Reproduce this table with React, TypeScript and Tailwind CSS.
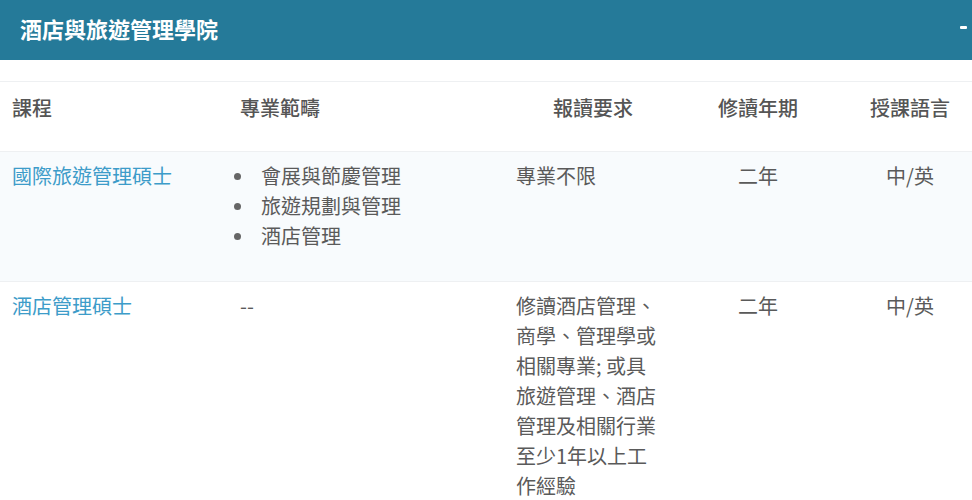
import React from "react";

const font = { fontFamily: '"Noto Sans CJK TC", "Noto Sans", sans-serif' };

const programs = [
    {
        name: "國際旅遊管理碩士",
        majors: ["會展與節慶管理", "旅遊規劃與管理", "酒店管理"],
        requirement: "專業不限",
        years: "二年",
        lang: "中/英",
    },
    {
        name: "酒店管理碩士",
        majors: [],
        requirement: "修讀酒店管理、商學、管理學或相關專業; 或具旅遊管理、酒店管理及相關行業至少1年以上工作經驗",
        years: "二年",
        lang: "中/英",
    },
];

const cols = "grid grid-cols-[228px_272px_186px_144px_160px] w-[990px]";

function ProgramRow({program, striped}) {
    return (
        <div className={`${cols} border-t border-[#eef0f2] text-[20px] leading-[30px] text-[#5a5a5a] ${striped ? "bg-[#f8fbfd] min-h-[130px]" : "bg-white"}`}>
            <div className="pl-3 pt-[9px]">
                <span className="text-[#3d9cc9]">{program.name}</span>
            </div>
            <div className="pl-[3px] pt-[9px]">
                {program.majors.length ? (
                    <ul>
                        {program.majors.map((m) => (
                            <li key={m} className="flex items-center">
                                <span className="w-[7px] h-[7px] rounded-full bg-[#666] ml-[3px] mr-[20px]"></span>
                                {m}
                            </li>
                        ))}
                    </ul>
                ) : (
                    <span className="pl-[9px]">--</span>
                )}
            </div>
            <div className="pl-4 pr-3 pt-[9px]">
                <div className="w-[146px]">{program.requirement}</div>
            </div>
            <div className="pt-[9px] text-center">{program.years}</div>
            <div className="pt-[9px] text-center">{program.lang}</div>
        </div>
    );
}

export default function App() {
    return (
        <div className="w-[972px] h-[500px] overflow-hidden bg-white" style={font}>
            <div className="h-[60px] bg-[#257a99] flex items-center justify-between pl-5 pr-[5px] pb-[3px]">
                <span className="text-white text-[22px] font-bold">酒店與旅遊管理學院</span>
                <span className="w-[7px] h-[3px] bg-white rounded-[1px] mb-[2px]"></span>
            </div>
            <div className="h-[21px]"></div>
            <div className={`${cols} border-t border-[#eef0f2] h-[70px] text-[20px] leading-[30px] font-medium text-[#555]`}>
                <div className="pl-3 pt-[11px]">課程</div>
                <div className="pl-3 pt-[11px]">專業範疇</div>
                <div className="pt-[11px] text-center">報讀要求</div>
                <div className="pt-[11px] text-center">修讀年期</div>
                <div className="pt-[11px] text-center">授課語言</div>
            </div>
            {programs.map((p, i) => (
                <ProgramRow key={p.name} program={p} striped={i === 0} />
            ))}
        </div>
    );
}
